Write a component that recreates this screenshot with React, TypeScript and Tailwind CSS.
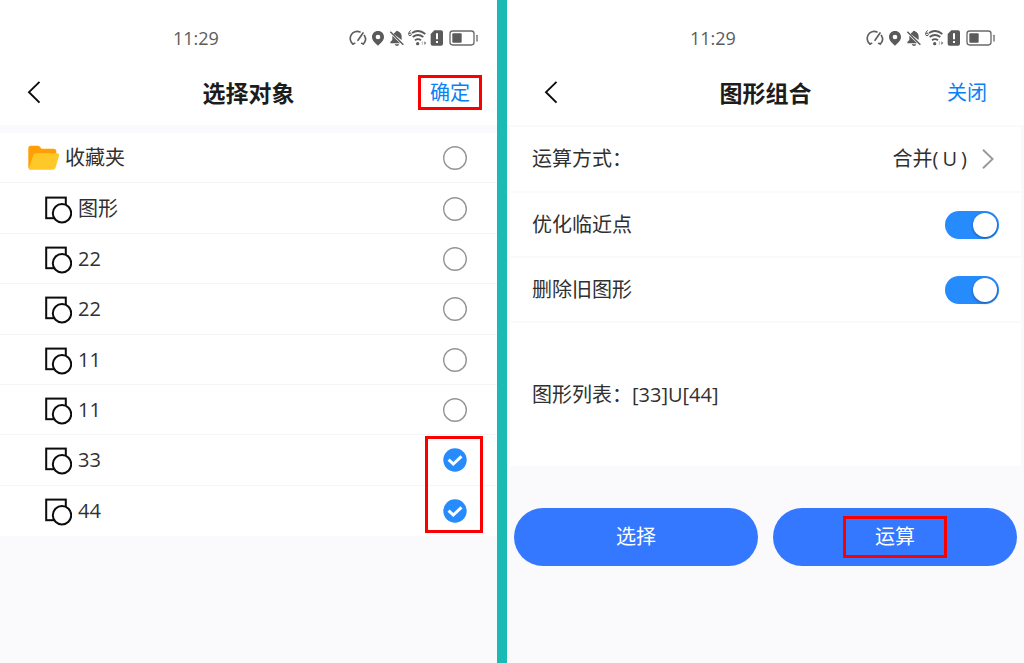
import type { ReactNode } from "react";

type Item = { id: string; name: string; folder?: boolean; checked?: boolean };

const items: Item[] = [
  { id: "folder", name: "收藏夹", folder: true },
  { id: "shape", name: "图形" },
  { id: "22-a", name: "22" },
  { id: "22-b", name: "22" },
  { id: "11-a", name: "11" },
  { id: "11-b", name: "11" },
  { id: "33", name: "33", checked: true },
  { id: "44", name: "44", checked: true },
];

function StatusIcons() {
  return (
    <svg className="h-[18px] w-[130px] shrink-0" viewBox="27 27 390 54" fill="none" aria-hidden="true">
      {/* gauge */}
      <g stroke="#5f5f5f" strokeWidth="5" strokeLinecap="round">
        <path d="M39 72 A21 21 0 0 1 60 36" />
        <path d="M73 46 A21 21 0 0 1 70 72" />
        <path d="M39 72 l5 -2 M70 72 l-5 -2" />
        <path d="M54 61 L69 39" />
      </g>
      {/* location */}
      <path
        fillRule="evenodd"
        fill="#5a5a5a"
        d="M114 33 C103 33 96 41 96 51 C96 62 106 70 114 77 C122 70 132 62 132 51 C132 41 125 33 114 33 Z M114 44 a7 7 0 1 1 0 14 a7 7 0 1 1 0 -14 Z"
      />
      {/* muted bell */}
      <path fill="#5a5a5a" d="M161 42 C163 38 167 37 168 34 Q171 31 174 34 C182 37 185 43 185 51 V60 Z" />
      <path fill="#5a5a5a" d="M157 47 L180 70 H151 V66 L157 60 Z M164 73 H178 Q176 78 171 78 Q166 78 164 73 Z" />
      <path stroke="#5a5a5a" strokeWidth="4.5" d="M151 35 L190 74" />
      {/* wifi 6 */}
      <path stroke="#5a5a5a" strokeWidth="3" d="M212 31 Q206 36 206 42 M210 39 a4 4 0 1 1 0 8 a4 4 0 1 1 0 -8" />
      <g stroke="#5a5a5a" strokeWidth="5.5">
        <path d="M216 39 Q236 26 256 42" />
        <path d="M218 51 Q234 39 250 51" />
        <path d="M225 61 Q234 54 243 61" />
      </g>
      <circle cx="233" cy="71" r="5" fill="#5a5a5a" />
      <path stroke="#b5b5b5" strokeWidth="3" d="M247 64 V74" />
      <path fill="#777" d="M253 64 L259 69 L253 75 Z" />
      {/* sim warning */}
      <path fill="#5a5a5a" d="M283 31 H303 Q309 31 309 37 V71 Q309 77 303 77 H278 Q272 77 272 71 V42 Z" />
      <path fill="#fff" d="M288 40 H294 V58 H288 Z M288 63 H294 V69 H288 Z" />
      {/* battery */}
      <rect x="330" y="33" width="72" height="42" rx="8" stroke="#6a6a6a" strokeWidth="4" />
      <rect x="337" y="40" width="28" height="28" rx="3" fill="#5a5a5a" />
      <path stroke="#6a6a6a" strokeWidth="4" strokeLinecap="round" d="M411 46 V63" />
    </svg>
  );
}

function BackIcon() {
  return (
    <svg className="h-6 w-4" viewBox="0 0 16 24" fill="none" aria-hidden="true">
      <path d="M13.5 0.8 L3 11.2 L13.5 21.6" stroke="#0a0a0a" strokeWidth="1.9" />
    </svg>
  );
}

function FolderIcon() {
  return (
    <svg className="h-[26px] w-8" viewBox="0 0 32 26" aria-hidden="true">
      <path d="M0.3 3.5 Q0.3 0.8 3 0.8 H9.5 Q11 0.8 12 2 L13.5 3.8 H25.5 Q28.3 3.8 28.3 6.5 V12 L3 24.5 Q0.3 24.5 0.3 22 Z" fill="#ff9f05" />
      <path d="M8.2 8.3 H29 Q31.8 8.3 31 11 L27.6 22.4 Q27 24.8 24.5 24.8 H2.8 Q0.4 24.8 1.2 22.4 L5.2 10.3 Q6 8.3 8.2 8.3 Z" fill="#ffc829" />
    </svg>
  );
}

function ShapesIcon() {
  return (
    <svg className="h-8 w-7" viewBox="0 0 28 32" fill="none" stroke="#0c0c0c" strokeWidth="2" aria-hidden="true">
      <rect x="2.2" y="4.6" width="19.6" height="20.6" />
      <circle cx="18" cy="20.2" r="9.2" fill="#fff" />
    </svg>
  );
}

function Phone({ title, action, highlight, gutters, children }: {
  title: string;
  action: string;
  highlight?: boolean;
  gutters: { status: string; header: string };
  children: ReactNode;
}) {
  return (
    <section className="flex min-w-0 flex-col bg-[#fafafd]">
      <header className="bg-white">
        <div className={`flex items-center justify-between pt-7 ${gutters.status}`}>
          <time className="text-[18px] leading-5 text-[#5c5c5c]">11:29</time>
          <StatusIcons />
        </div>
        <div className={`grid h-[77px] grid-cols-[1fr_auto_1fr] items-center pt-3 ${gutters.header}`}>
          <button aria-label="返回" className="ml-[11px] justify-self-start"><BackIcon /></button>
          <h1 className="text-[23px] leading-8 font-bold text-[#1c1c1c]">{title}</h1>
          <button
            className={`h-[35px] justify-self-end border-3 px-[9px] text-[20px] leading-7 text-[#0a80f5] ${highlight ? "border-[#fb0000]" : "border-transparent"}`}
          >
            {action}
          </button>
        </div>
      </header>
      {children}
    </section>
  );
}

function CheckRow({ item }: { item: Item }) {
  return (
    <li className="border-b border-[#f5f5f7] last:border-transparent">
      <label className={`flex h-full items-center pt-px pr-[30px] ${item.folder ? "gap-[5px] pl-7" : "gap-[6px] pl-11"}`}>
        {item.folder ? <FolderIcon /> : <ShapesIcon />}
        <span className="flex-1 text-[20px] leading-7 text-[#303030]">{item.name}</span>
        <span className="relative h-6 w-6">
          <input type="checkbox" defaultChecked={item.checked} className="peer block h-6 w-6 appearance-none rounded-full" />
          <svg className="pointer-events-none absolute inset-0 h-6 w-6 peer-checked:hidden" viewBox="0 0 24 24" fill="none" aria-hidden="true">
            <circle cx="12" cy="12" r="11.3" stroke="#949494" strokeWidth="1.4" />
          </svg>
          <svg className="pointer-events-none absolute inset-0 hidden h-6 w-6 peer-checked:block" viewBox="0 0 24 24" fill="none" aria-hidden="true">
            <circle cx="12" cy="12" r="11.7" fill="#268bfd" />
            <path d="M5.6 11.6 L10.3 16 L18.5 8.4" stroke="#fff" strokeWidth="3" />
          </svg>
        </span>
      </label>
    </li>
  );
}

function SwitchRow({ label }: { label: string }) {
  return (
    <label className="flex h-[65px] items-center justify-between border-b-2 border-[#fafafb] px-[22px]">
      <span>{label}</span>
      <input
        type="checkbox"
        role="switch"
        defaultChecked
        className="flex h-7 w-[54px] appearance-none items-center rounded-full bg-[#d5d5d5] p-[2px] before:h-6 before:w-6 before:rounded-full before:bg-white before:shadow-[0_1px_3px_rgba(0,0,0,0.4)] checked:justify-end checked:bg-[#268bfd]"
      />
    </label>
  );
}

export default function App() {
  return (
    <main className="grid min-h-screen grid-cols-[497fr_10px_517fr] bg-[#fafafd] font-['Open_Sans','Noto_Sans_CJK_SC',sans-serif]">
      <Phone title="选择对象" action="确定" highlight gutters={{ status: "pl-[173px] pr-[18px]", header: "px-[15px]" }}>
        <div className="relative mt-2">
          <ul className="grid h-[403px] auto-rows-fr bg-white">
            {items.map((item) => <CheckRow key={item.id} item={item} />)}
          </ul>
          <span className="pointer-events-none absolute right-[14px] bottom-[3px] h-[97px] w-[58px] border-3 border-[#fb0000]" />
        </div>
      </Phone>

      <div className="bg-[#1cbab5]" />

      <Phone title="图形组合" action="关闭" gutters={{ status: "pl-[183px] pr-7", header: "px-[25px]" }}>
        <div className="mx-[3px] mt-[2px] bg-white text-[20px] leading-7 text-[#303030]">
          <div className="flex h-[66px] items-center justify-between border-b-2 border-[#fafafb] px-[22px]">
            <span>运算方式：</span>
            <button className="flex items-center gap-3">
              <span>合并(<span className="px-1">U</span>)</span>
              <svg className="mr-1 h-5 w-4" viewBox="0 0 16 20" fill="none" aria-hidden="true">
                <path d="M4 0.8 L13.6 10 L4 19.2" stroke="#999" strokeWidth="1.9" />
              </svg>
            </button>
          </div>
          <SwitchRow label="优化临近点" />
          <SwitchRow label="删除旧图形" />
          <div className="flex h-[143px] items-center px-[22px]">图形列表：[33]U[44]</div>
        </div>
        <div className="mt-[42px] grid grid-cols-2 gap-[15px] px-[7px] text-[20px] leading-7 text-white">
          <button className="h-[58px] rounded-full bg-[#3478ff]">选择</button>
          <button className="flex h-[58px] items-center justify-center rounded-full bg-[#3478ff]">
            <span className="border-3 border-[#fb0000] px-[29px] py-1">
              运算
            </span>
          </button>
        </div>
      </Phone>
    </main>
  );
}
